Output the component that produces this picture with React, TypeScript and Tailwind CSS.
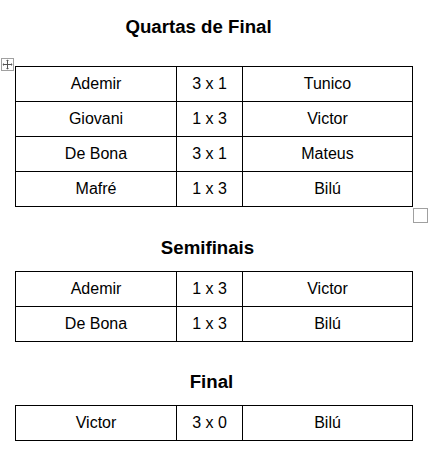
import React from "react";

type Row = [string, string, string];

const quartas: Row[] = [
  ["Ademir", "3 x 1", "Tunico"],
  ["Giovani", "1 x 3", "Victor"],
  ["De Bona", "3 x 1", "Mateus"],
  ["Mafré", "1 x 3", "Bilú"],
];
const semis: Row[] = [
  ["Ademir", "1 x 3", "Victor"],
  ["De Bona", "1 x 3", "Bilú"],
];
const final: Row[] = [["Victor", "3 x 0", "Bilú"]];

function Table({ rows }: { rows: Row[] }) {
  return (
    <div className="w-[398px] border-l border-t border-black">
      {rows.map((r, i) => (
        <div key={i} className="flex h-[35px]">
          <div className="w-[161px] h-full border-r border-b border-black flex items-center justify-center">{r[0]}</div>
          <div className="w-[66px] h-full border-r border-b border-black flex items-center justify-center">{r[1]}</div>
          <div className="w-[170px] h-full border-r border-b border-black flex items-center justify-center">{r[2]}</div>
        </div>
      ))}
    </div>
  );
}

function Title({ children, className }: { children: React.ReactNode; className: string }) {
  return (
    <div className={"w-[398px] text-center font-bold text-[18.67px] leading-[22px] " + className}>{children}</div>
  );
}

export default function App() {
  return (
    <div
      className="w-[429px] h-[459px] bg-white text-black text-[16px] relative"
      style={{ fontFamily: '"Liberation Sans", Arial, sans-serif' }}
    >
      <div className="pl-[15px] pt-[16px] flex flex-col">
        <Title className="pr-[31px]">Quartas de Final</Title>
        <div className="h-[28px] relative">
          <div className="absolute left-[-14px] top-[20px] w-[13px] h-[13px] border border-[#a0a0a0] bg-white flex items-center justify-center">
            <svg width="11" height="11" viewBox="0 0 11 11" fill="none">
              <path d="M5.5 1v9M1 5.5h9" stroke="#555" strokeWidth="1" />
              <path d="M5.5 0.5L4 2h3zM5.5 10.5L4 9h3zM0.5 5.5L2 4v3zM10.5 5.5L9 4v3z" fill="#555" />
            </svg>
          </div>
        </div>
        <Table rows={quartas} />
        <div className="h-[30px] relative">
          <div className="absolute left-[398px] top-[1px] w-[15px] h-[15px] border border-[#a0a0a0] bg-white" />
        </div>
        <Title className="pr-[13px]">Semifinais</Title>
        <div className="h-[12px]" />
        <Table rows={semis} />
        <div className="h-[29px]" />
        <Title className="pr-[5px]">Final</Title>
        <div className="h-[12px]" />
        <Table rows={final} />
      </div>
    </div>
  );
}
